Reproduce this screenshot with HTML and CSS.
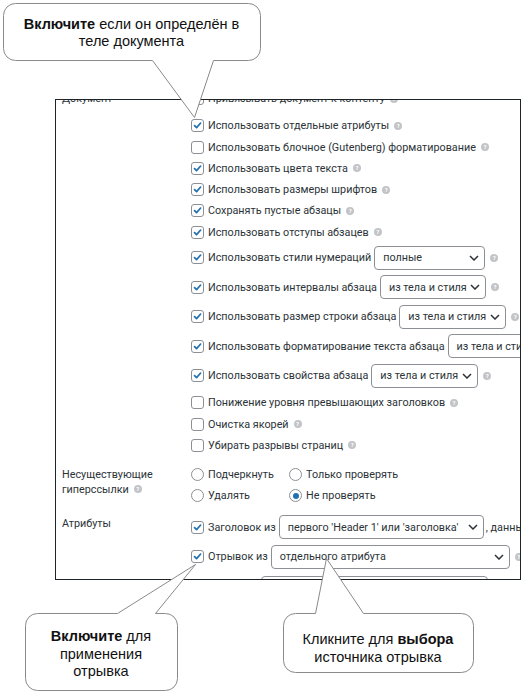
FILE: index.html
```html
<!DOCTYPE html>
<html lang="ru">
<head>
    <meta charset="UTF-8">
    <title>Настройки импорта документа</title>
    <link rel="stylesheet" href="styles.css">
</head>
<body>
    <svg class="defs" width="0" height="0">
        <symbol id="tick" viewBox="0 0 13 13">
            <path d="M3 6.6 L5.4 9 L10.2 3.6" fill="none" stroke="#2271b1" stroke-width="2" stroke-linecap="round" stroke-linejoin="round"/>
        </symbol>
        <symbol id="chev" viewBox="0 0 10 6">
            <path d="M1 1 L5 5 L9 1" fill="none" stroke="#2c3338" stroke-width="1.5"/>
        </symbol>
    </svg>

    <div class="page">
        <div class="frame">
            <div class="sheet">
                <!-- Документ -->
                <div class="section">
                    <div class="label">Документ</div>
                    <div class="opts">
                        <div class="row first"><span class="cb"></span>Привязывать документ к контенту<span class="help">?</span></div>
                        <div class="row"><span class="cb"><svg><use href="#tick"/></svg></span>Использовать отдельные атрибуты<span class="help">?</span></div>
                        <div class="row"><span class="cb"></span>Использовать блочное (Gutenberg) форматирование<span class="help">?</span></div>
                        <div class="row"><span class="cb"><svg><use href="#tick"/></svg></span>Использовать цвета текста<span class="help">?</span></div>
                        <div class="row"><span class="cb"><svg><use href="#tick"/></svg></span>Использовать размеры шрифтов<span class="help">?</span></div>
                        <div class="row"><span class="cb"><svg><use href="#tick"/></svg></span>Сохранять пустые абзацы<span class="help">?</span></div>
                        <div class="row"><span class="cb"><svg><use href="#tick"/></svg></span>Использовать отступы абзацев<span class="help">?</span></div>
                        <div class="row tall"><span class="cb"><svg><use href="#tick"/></svg></span>Использовать стили нумераций
                            <span class="sel w111">полные<svg><use href="#chev"/></svg></span><span class="help">?</span></div>
                        <div class="row tall"><span class="cb"><svg><use href="#tick"/></svg></span>Использовать интервалы абзаца
                            <span class="sel w106">из тела и стиля<svg><use href="#chev"/></svg></span><span class="help">?</span></div>
                        <div class="row tall"><span class="cb"><svg><use href="#tick"/></svg></span>Использовать размер строки абзаца
                            <span class="sel w107">из тела и стиля<svg><use href="#chev"/></svg></span><span class="help">?</span></div>
                        <div class="row tall"><span class="cb"><svg><use href="#tick"/></svg></span>Использовать форматирование текста абзаца
                            <span class="sel w107">из тела и стиля<svg><use href="#chev"/></svg></span><span class="help">?</span></div>
                        <div class="row tall"><span class="cb"><svg><use href="#tick"/></svg></span>Использовать свойства абзаца
                            <span class="sel w107">из тела и стиля<svg><use href="#chev"/></svg></span><span class="help">?</span></div>
                        <div class="row gap"><span class="cb"></span>Понижение уровня превышающих заголовков<span class="help">?</span></div>
                        <div class="row"><span class="cb"></span>Очистка якорей<span class="help">?</span></div>
                        <div class="row"><span class="cb"></span>Убирать разрывы страниц<span class="help">?</span></div>
                    </div>
                </div>

                <!-- Несуществующие гиперссылки -->
                <div class="section links">
                    <div class="label">Несуществующие<br>гиперссылки<span class="help">?</span></div>
                    <div class="radios">
                        <div class="row"><span class="rb"></span>Подчеркнуть</div>
                        <div class="row"><span class="rb"></span>Только проверять</div>
                        <div class="row"><span class="rb"></span>Удалять</div>
                        <div class="row"><span class="rb on"></span>Не проверять</div>
                    </div>
                </div>

                <!-- Атрибуты -->
                <div class="section attrs">
                    <div class="label">Атрибуты</div>
                    <div class="opts">
                        <div class="row tall"><span class="cb"><svg><use href="#tick"/></svg></span>Заголовок из
                            <span class="sel w205">первого 'Header 1' или 'заголовка'<svg><use href="#chev"/></svg></span><span class="after">, данные</span></div>
                        <div class="row tall"><span class="cb"><svg><use href="#tick"/></svg></span>Отрывок из
                            <span class="sel w239">отдельного атрибута<svg><use href="#chev"/></svg></span><span class="help">?</span></div>
                        <div class="row tall sub"><span class="sel w227"></span></div>
                    </div>
                </div>
            </div>
        </div>
    </div>

    <svg class="shapes" width="522" height="693" viewBox="0 0 522 693">
        <path d="M15.5 3.5 H248.5 A12 12 0 0 1 260.5 15.5 V48.5 A12 12 0 0 1 248.5 60.5 H213.5 L194.5 117.5 L152.5 60.5 H15.5 A12 12 0 0 1 3.5 48.5 V15.5 A12 12 0 0 1 15.5 3.5 Z"/>
        <path d="M37.5 613.5 H117.5 L195.5 564.5 L155.5 613.5 H165.5 A12 12 0 0 1 177.5 625.5 V678.5 A12 12 0 0 1 165.5 690.5 H37.5 A12 12 0 0 1 25.5 678.5 V625.5 A12 12 0 0 1 37.5 613.5 Z"/>
        <path d="M295.5 613.5 H315.5 L326.5 558.5 L363.5 613.5 H461.5 A12 12 0 0 1 473.5 625.5 V660.5 A12 12 0 0 1 461.5 672.5 H295.5 A12 12 0 0 1 283.5 660.5 V625.5 A12 12 0 0 1 295.5 613.5 Z"/>
    </svg>

    <div class="bubble bubble-top"><b>Включите</b> если он определён в<br>теле документа</div>
    <div class="bubble bubble-left"><b>Включите</b> для<br>применения<br>отрывка</div>
    <div class="bubble bubble-right">Кликните для <b>выбора</b><br>источника отрывка</div>
</body>
</html>
```

FILE: styles.css
```css
body {
    margin: 0;
    width: 522px;
    height: 693px;
    position: relative;
    overflow: hidden;
    background: #fff;
    font-family: Roboto, "Open Sans", sans-serif;
    color: #2c3338;
}

.defs {
    position: absolute;
}

.page {
    padding: 99px 0 0 55px;
}

.frame {
    width: 464px;
    height: 479px;
    border: 1px solid #1d2327;
    overflow: hidden;
}

.sheet {
    margin-top: -12px;
    padding-left: 6px;
    font-size: 10.8px;
}

.section {
    display: grid;
    grid-template-columns: 129px auto;
}

.label {
    padding-top: 3px;
    line-height: 15px;
}

.row {
    display: flex;
    align-items: center;
    height: 21.25px;
    white-space: nowrap;
}

.row.first {
    margin-bottom: 6px;
}

.row.tall {
    height: 29.5px;
}

.row.gap {
    margin-top: 2px;
}

.row.sub {
    padding-left: 67px;
    align-items: flex-start;
    padding-top: 4px;
    box-sizing: border-box;
}

.cb, .rb {
    flex: none;
    width: 11px;
    height: 11px;
    border: 1px solid #8c8f94;
    border-radius: 3px;
    margin-right: 4px;
    background: #fff;
    display: flex;
}

.cb svg {
    width: 11px;
    height: 11px;
}

.rb {
    border-radius: 50%;
    align-items: center;
    justify-content: center;
}

.rb.on::after {
    content: "";
    width: 6px;
    height: 6px;
    border-radius: 50%;
    background: #2271b1;
}

.help {
    flex: none;
    display: inline-flex;
    align-items: center;
    justify-content: center;
    width: 8px;
    height: 8px;
    border-radius: 50%;
    background: #c3c4c7;
    color: #fff;
    font-size: 6px;
    font-weight: bold;
    line-height: 1;
    margin-left: 5px;
}

.sel {
    flex: none;
    box-sizing: border-box;
    height: 24px;
    margin-left: 3px;
    padding: 0 5px 0 8px;
    border: 1px solid #8c8f94;
    border-radius: 4px;
    display: flex;
    align-items: center;
    justify-content: space-between;
    background: #fff;
    color: #2c3338;
}

.sel svg {
    width: 10px;
    height: 6px;
    flex: none;
}

.w106 { width: 106px; }
.w107 { width: 107px; }
.w111 { width: 111px; }
.w205 { width: 205px; }
.w227 { width: 227px; }
.w239 { width: 239px; }

.after {
    margin-left: 2px;
}

.links {
    margin-top: 8px;
}

.links .label .help {
    vertical-align: middle;
    margin-top: -2px;
}

.radios {
    display: grid;
    grid-template-columns: 98px auto;
}

.attrs {
    margin-top: 6px;
}

.shapes {
    position: absolute;
    left: 0;
    top: 0;
}

.shapes path {
    fill: #fff;
    stroke: #8a8a8a;
    stroke-width: 1;
}

.bubble {
    position: absolute;
    text-align: center;
    font-family: "Liberation Sans", Arial, sans-serif;
    font-size: 14.5px;
    line-height: 17px;
    color: #111;
}

.bubble-top {
    left: 3px;
    top: 16px;
    width: 257px;
}

.bubble-left {
    left: 25px;
    top: 628px;
    width: 152px;
    line-height: 17.5px;
}

.bubble-right {
    left: 283px;
    top: 630px;
    width: 190px;
    line-height: 18px;
}
```
